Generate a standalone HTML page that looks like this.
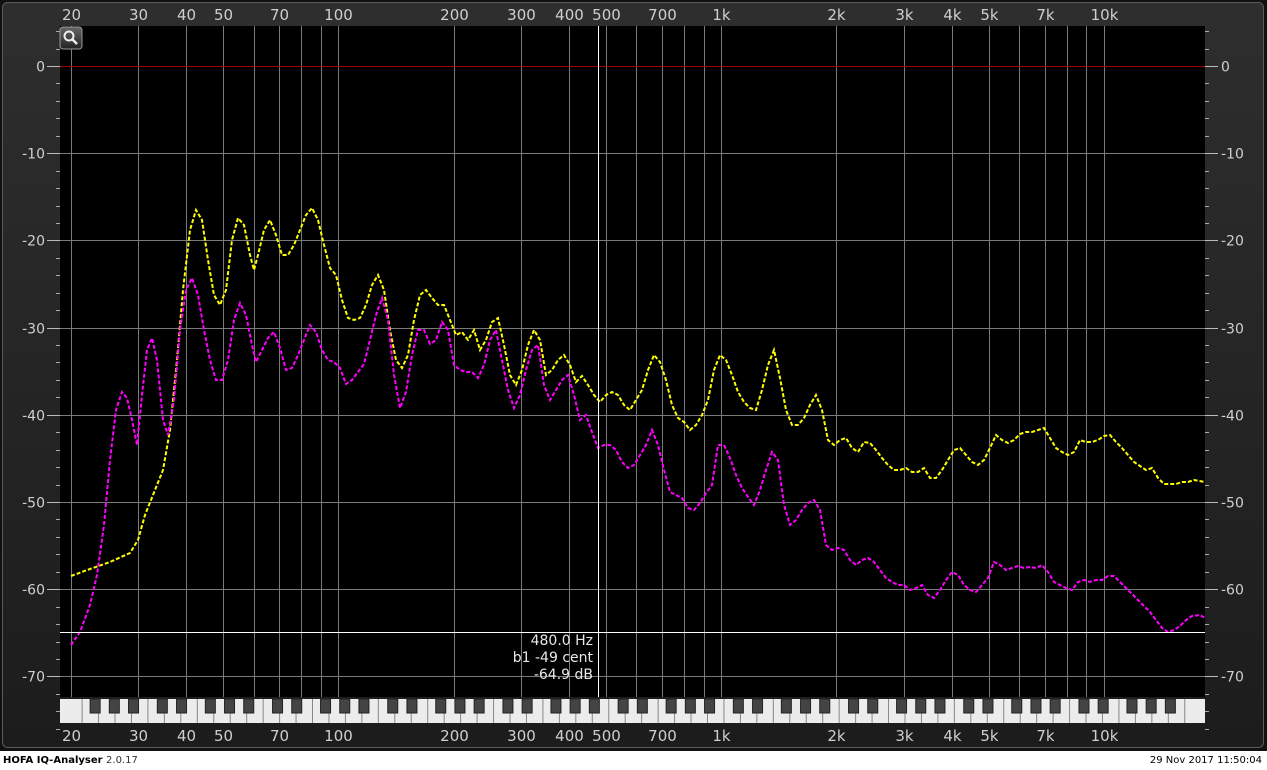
<!DOCTYPE html>
<html><head><meta charset="utf-8"><style>
html,body{margin:0;padding:0;background:#fff;width:1267px;height:770px;overflow:hidden}
svg{display:block}
text{font-family:"DejaVu Sans","Liberation Sans",sans-serif}
</style></head><body>
<svg id="s" width="1267" height="770" xmlns="http://www.w3.org/2000/svg">
<defs><linearGradient id="bg" x1="0" y1="0" x2="0" y2="1"><stop offset="0" stop-color="#2e2e2e"/><stop offset="1" stop-color="#1c1c1c"/></linearGradient>
<linearGradient id="mg" x1="0" y1="0" x2="0" y2="1"><stop offset="0" stop-color="#666"/><stop offset="1" stop-color="#222"/></linearGradient></defs>
<rect x="0" y="0" width="1267" height="751" fill="#111"/>
<rect x="2.5" y="2.5" width="1261" height="745" rx="5" fill="url(#bg)" stroke="#5a5a5a"/>
<rect x="60" y="26" width="1145" height="671" fill="#000"/>
<g id="grid"></g>
<line x1="60" y1="66.5" x2="1205" y2="66.5" stroke="#a00000"/>
<g id="kb"></g>
<polyline id="y" fill="none" stroke="#ffff00" stroke-width="2" stroke-dasharray="4 2"/>
<polyline id="m" fill="none" stroke="#ff00ff" stroke-width="2" stroke-dasharray="4 2"/>
<line x1="598.5" y1="26" x2="598.5" y2="697" stroke="#fff"/>
<line x1="60" y1="632.5" x2="1205" y2="632.5" stroke="#fff"/>
<g fill="#e8e8e8" font-size="14" text-anchor="end">
<text x="593" y="645">480.0 Hz</text><text x="593" y="662">b1 -49 cent</text><text x="593" y="679">-64.9 dB</text></g>
<rect x="60" y="27" width="22" height="22" rx="3" fill="url(#mg)" stroke="#999"/>
<circle cx="69" cy="36" r="4.5" fill="none" stroke="#eee" stroke-width="2"/>
<line x1="72.5" y1="39.5" x2="77" y2="44" stroke="#eee" stroke-width="2.5"/>
<text x="3" y="763" font-size="10" font-weight="bold" fill="#000" font-family="Liberation Sans">HOFA IQ-Analyser <tspan font-weight="normal" fill="#333">2.0.17</tspan></text>
<text x="1262" y="763" font-size="10" fill="#000" text-anchor="end" font-family="Liberation Sans">29 Nov 2017 11:50:04</text>
</svg>
<script>
var NS="http://www.w3.org/2000/svg",g=document.getElementById('grid'),kb=document.getElementById('kb');
function el(p,t,a,txt){var e=document.createElementNS(NS,t);for(var k in a)e.setAttribute(k,a[k]);if(txt)e.textContent=txt;p.appendChild(e);return e}
function X(f){return 71+382.7*Math.log10(f/20)}
var labs={20:'20',30:'30',40:'40',50:'50',70:'70',100:'100',200:'200',300:'300',400:'400',500:'500',700:'700',1000:'1k',2000:'2k',3000:'3k',4000:'4k',5000:'5k',7000:'7k',10000:'10k'};
var fs=[];[10,100,1000,10000].forEach(function(d){for(var i=1;i<10;i++)fs.push(i*d)});
fs.forEach(function(f){if(f<20)return;var x=X(f);if(x>1205)return;x=Math.round(x)+.5;
el(g,'line',{x1:x,y1:26,x2:x,y2:697,stroke:'#7a7a7a','stroke-width':1});
if(labs[f]){el(g,'text',{x:x,y:20,'font-size':15,fill:'#cfcfcf','text-anchor':'middle'},labs[f]);el(g,'text',{x:x,y:741,'font-size':15,fill:'#cfcfcf','text-anchor':'middle'},labs[f]);}});
for(var d=0;d>=-70;d-=10){var y=Math.round(66+87.2*(-d/10))+.5;
if(d<0)el(g,'line',{x1:60,y1:y,x2:1205,y2:y,stroke:'#7a7a7a'});
el(g,'line',{x1:47,y1:y,x2:60,y2:y,stroke:'#bbb'});el(g,'line',{x1:1205,y1:y,x2:1218,y2:y,stroke:'#bbb'});
el(g,'text',{x:45,y:y+5,'font-size':14,fill:'#cfcfcf','text-anchor':'end'},String(d));
el(g,'text',{x:1221,y:y+5,'font-size':14,fill:'#cfcfcf'},String(d));}
for(var v=4;v>=-76;v-=2){if(v%10==0)continue;var y=Math.round(66+8.72*(-v))+.5;
el(g,'line',{x1:56,y1:y,x2:60,y2:y,stroke:'#aaa'});el(g,'line',{x1:1205,y1:y,x2:1209,y2:y,stroke:'#aaa'});}
el(kb,'rect',{x:60,y:699,width:1145,height:24,fill:'#ececec'});
var semi=382.7*Math.log10(2)/12, oct=semi*12, w=oct/7;
var c0=X(16.3516);
for(var o=0;o<12;o++){var start=c0-semi/2+o*oct;for(var k=0;k<7;k++){var x=start+k*w;if(x>80&&x<1190)el(kb,'line',{x1:x,y1:699,x2:x,y2:723,stroke:'#888'});}
[1,3,6,8,10].forEach(function(s){var cx=c0+(o*12+s)*semi;if(cx>80&&cx<1180)el(kb,'rect',{x:cx-5,y:699,width:10,height:14,fill:'#444',stroke:'#222'});});}
var Y=[71,576,90,569,110,562,130,553,138,540,145,515,155,490,163,470,170,430,177,360,183,290,190,230,196,210,202,220,208,260,214,295,220,305,226,290,232,240,238,218,244,225,250,255,254,270,258,255,264,230,270,220,276,235,282,255,288,255,294,245,300,230,306,215,312,208,318,220,324,245,330,268,336,275,342,300,348,318,354,320,360,318,366,305,372,285,378,275,384,290,390,330,396,360,402,368,408,355,414,320,420,295,426,290,432,298,438,305,444,305,450,320,456,335,462,332,468,340,474,330,480,350,486,340,492,322,498,318,504,345,510,375,516,385,522,370,528,345,534,330,540,340,546,375,552,370,558,360,564,355,570,365,576,382,582,376,588,385,594,395,600,402,606,395,612,392,618,395,624,405,630,410,636,400,642,390,648,370,654,355,660,362,666,380,672,405,678,418,684,422,690,430,696,425,702,415,708,400,714,370,720,355,726,360,732,375,738,392,744,402,750,408,756,410,762,390,768,365,774,350,780,378,786,410,792,425,798,425,804,418,810,405,816,395,822,410,828,440,834,445,840,440,846,438,852,448,858,452,864,442,870,443,876,450,882,458,888,465,894,470,900,470,906,468,912,472,918,472,924,468,930,478,936,478,942,470,948,460,954,450,960,448,966,455,972,462,978,465,984,460,990,448,996,435,1002,440,1008,443,1014,440,1020,434,1026,432,1032,432,1038,430,1044,428,1050,438,1056,448,1062,452,1068,455,1074,452,1080,440,1086,442,1092,442,1098,440,1104,436,1110,435,1116,442,1122,448,1128,455,1134,462,1140,466,1146,470,1152,468,1158,478,1164,484,1170,484,1176,484,1182,482,1188,482,1194,480,1205,482];
var M=[71,645,80,632,90,605,97,575,104,525,110,460,116,410,122,392,127,398,132,420,137,445,142,395,147,350,152,338,157,360,163,420,168,435,174,400,180,330,186,290,192,278,198,295,204,330,210,360,216,380,222,380,228,360,234,320,240,303,246,315,252,345,256,362,262,350,268,338,274,332,280,348,286,370,292,368,298,355,304,340,310,325,316,332,322,350,328,360,334,362,340,368,346,384,352,380,358,372,364,364,370,340,376,315,382,298,388,320,394,375,400,408,406,392,412,355,418,330,424,330,430,344,436,340,442,322,448,330,454,365,460,370,466,372,472,372,478,378,484,365,490,340,496,330,502,360,508,390,514,408,520,395,526,370,532,350,538,345,544,385,550,400,556,390,562,380,568,375,574,395,580,420,586,415,592,432,598,448,604,445,610,445,616,450,622,462,628,468,634,465,640,455,646,445,652,430,658,445,664,470,670,492,676,495,682,498,688,508,694,510,700,503,706,493,712,485,718,445,724,445,730,458,736,475,742,488,748,497,754,505,760,490,766,470,772,452,778,460,784,505,790,525,796,520,802,510,808,503,814,500,820,510,826,545,832,550,838,548,844,550,850,560,856,565,862,560,868,558,874,562,880,570,886,578,892,582,898,585,904,585,910,590,916,588,922,585,928,595,934,598,940,590,946,580,952,572,958,575,964,585,970,590,976,592,982,585,988,578,994,562,1000,565,1006,570,1012,568,1018,566,1024,568,1030,567,1036,568,1042,565,1048,572,1054,582,1060,585,1066,588,1072,590,1078,582,1084,580,1090,582,1096,580,1102,580,1108,576,1114,576,1120,582,1126,588,1132,594,1138,600,1144,606,1150,612,1156,620,1162,628,1168,632,1174,630,1180,626,1186,620,1192,616,1200,615,1205,618];
function pts(a){var s=[];for(var i=0;i<a.length;i+=2)s.push(a[i]+','+a[i+1]);return s.join(' ')}
document.getElementById('y').setAttribute('points',pts(Y));
document.getElementById('m').setAttribute('points',pts(M));
</script>
</body></html>
